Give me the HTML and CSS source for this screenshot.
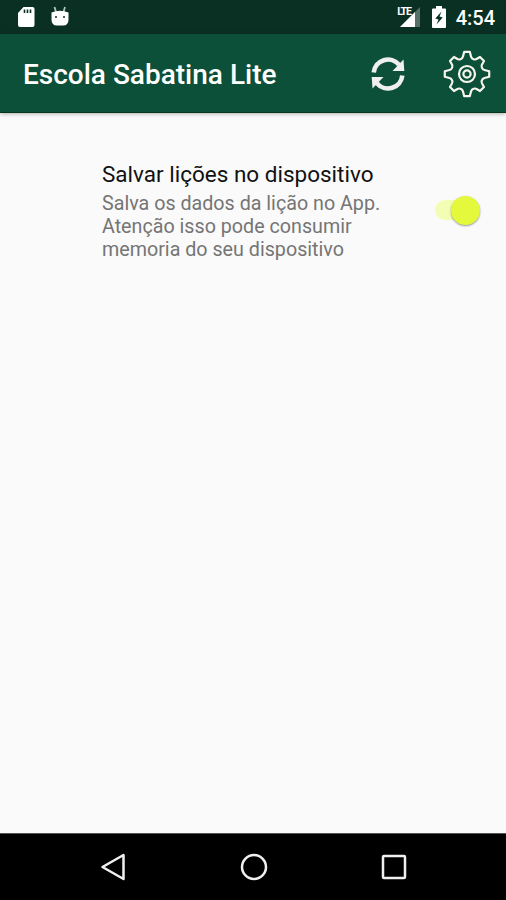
FILE: index.html
```html
<!DOCTYPE html>
<html lang="pt-br">
<head>
  <meta charset="UTF-8">
  <meta name="viewport" content="width=device-width, initial-scale=1.0">
  <title>Escola Sabatina Lite</title>
  <link rel="stylesheet" href="styles.css">
</head>
<body>
  <div class="statusbar">
    <svg class="icon-sd" width="18" height="22" viewBox="0 0 18 22">
      <path d="M6.500 1H15.500q2 0 2 2v16q0 2-2 2H3q-2 0-2-2V7z" fill="#fff"/>
      <path d="M7.500 3.500v3.500M10.500 3.500v3.500M13.500 3.500v3.500" stroke="#0a3024" stroke-width="1.600"/>
    </svg>
    <svg class="icon-android" width="20" height="22" viewBox="0 0 20 22">
      <path d="M4.500 1l1.500 5M15 1l-1.500 5" stroke="#b5c1bd" stroke-width="1.800"/>
      <path d="M1.500 6.500q8.500-3.500 17 0v7q0 6-5.500 6H7q-5.500 0-5.500-6z" fill="#fff"/>
      <circle cx="6" cy="11" r="1" fill="#0a3024"/>
      <circle cx="14" cy="11" r="1" fill="#0a3024"/>
    </svg>
    <div class="signal">
      <span class="lte">LTE</span>
      <svg width="22" height="20" viewBox="0 0 22 20">
        <path d="M1 20L21 0v20z" fill="#547068"/>
        <path d="M1 20L16 5v15z" fill="#fff"/>
      </svg>
    </div>
    <svg class="icon-battery" width="14" height="22" viewBox="0 0 14 22">
      <path d="M4 0h6v2.500h3q1 0 1 1V21q0 1-1 1H1q-1 0-1-1V3.500q0-1 1-1h3z" fill="#fff"/>
      <path d="M9.500 5.500L3.300 12.500l3.200 1-2 5L10.700 11.500l-3.200-1z" fill="#0a3024"/>
    </svg>
    <span class="clock">4:54</span>
  </div>

  <div class="toolbar">
    <h1>Escola Sabatina Lite</h1>
    <a class="action" href="#" aria-label="Atualizar">
      <svg width="36" height="36" viewBox="-18 -18 36 36">
        <g id="seta">
          <path d="M-14.300-1.500A14.300 14.300 0 0 1 11-9.200" fill="none" stroke="#f0f0f0" stroke-width="4.600"/>
          <path d="M15.500-14.500L16.300-3H4.500z" fill="#f0f0f0"/>
        </g>
        <use href="#seta" transform="rotate(180)"/>
      </svg>
    </a>
    <a class="action" href="#" aria-label="Configurações">
      <svg width="48" height="48" viewBox="-24 -24 48 48" fill="none" stroke="#f7f7ef" stroke-width="2.200" stroke-linejoin="round">
        <path d="M-2.800-22.200H2.800L4-17.500Q4.500-15.500 6.500-14.800Q8.500-14 10-15.300L13-17 17-13 15.300-10Q14-8.500 14.800-6.500Q15.500-4.500 17.500-4L22.200-2.800V2.800L17.500 4Q15.500 4.500 14.800 6.500Q14 8.500 15.300 10L17 13 13 17 10 15.300Q8.500 14 6.500 14.800Q4.500 15.500 4 17.500L2.800 22.200H-2.800L-4 17.500Q-4.500 15.500-6.500 14.800Q-8.500 14-10 15.300L-13 17-17 13-15.300 10Q-14 8.500-14.800 6.500Q-15.500 4.500-17.500 4L-22.200 2.800V-2.800L-17.500-4Q-15.500-4.500-14.800-6.500Q-14-8.500-15.300-10L-17-13-13-17-10-15.300Q-8.500-14-6.500-14.800Q-4.500-15.500-4-17.500z"/>
        <circle r="8"/>
        <circle r="3.600"/>
      </svg>
    </a>
  </div>

  <!-- Preferências -->
  <div class="content">
    <div class="preference">
      <div class="preference-text">
        <h2>Salvar lições no dispositivo</h2>
        <p>Salva os dados da lição no App.<br>Atenção isso pode consumir<br>memoria do seu dispositivo</p>
      </div>
      <div class="switch"><span class="thumb"></span></div>
    </div>
  </div>

  <div class="navbar">
    <svg width="28" height="30" viewBox="0 0 28 30"><path d="M2.500 15L23.500 3v24z"/></svg>
    <svg width="28" height="30" viewBox="0 0 28 30"><circle cx="14" cy="15" r="12"/></svg>
    <svg width="28" height="30" viewBox="0 0 28 30"><rect x="3" y="4" width="22" height="22" rx="1"/></svg>
  </div>
</body>
</html>
```

FILE: styles.css
```css
* {
  margin: 0;
  padding: 0;
  box-sizing: border-box;
}

body {
  font-family: Roboto, sans-serif;
  background-color: #fafafa;
  display: flex;
  flex-direction: column;
  height: 100vh;
  overflow: hidden;
}

svg {
  display: block;
  flex: none;
}

/* Barra de status */
.statusbar {
  height: 34px;
  background-color: #0a3024;
  color: white;
  display: flex;
  align-items: center;
  padding: 0 11px 0 17px;
}

.icon-android {
  margin-left: 15px;
}

.signal {
  display: flex;
  align-items: flex-start;
  margin-left: auto;
}

.lte {
  font-size: 10.5px;
  line-height: 10px;
  font-weight: 700;
  letter-spacing: -1.2px;
  margin-right: -12px;
  z-index: 1;
}

.icon-battery {
  margin-left: 11px;
}

.clock {
  font-size: 20px;
  line-height: 24px;
  font-weight: 500;
  margin-left: 10px;
  padding-top: 2px;
}

/* Barra do aplicativo */
.toolbar {
  height: 79px;
  background-color: #0d5039;
  border-bottom: 1px solid #063718;
  box-shadow: 0 1px 4px rgba(0, 0, 0, 0.3);
  color: white;
  display: flex;
  align-items: center;
  gap: 37px;
  padding: 1px 15px 0 23px;
}

.toolbar h1 {
  font-size: 28px;
  font-weight: 500;
  margin-right: auto;
  padding-top: 2px;
  white-space: nowrap;
}

/* Lista de preferências */
.content {
  flex: 1;
}

.preference {
  display: flex;
  align-items: center;
  justify-content: space-between;
  padding: 47px 26px 0 102px;
}

.preference h2 {
  font-size: 22.5px;
  line-height: 28px;
  font-weight: 400;
  color: #111;
  white-space: nowrap;
}

.preference p {
  font-size: 19.7px;
  line-height: 23px;
  color: #757575;
  margin-top: 4px;
  white-space: nowrap;
}

.switch {
  width: 45px;
  height: 20px;
  border-radius: 10px;
  background-color: #f4fdb4;
  display: flex;
  align-items: center;
  justify-content: flex-end;
  margin-bottom: 1px;
}

.thumb {
  width: 29px;
  height: 29px;
  border-radius: 50%;
  background-color: #e4f83c;
  box-shadow: 0 1px 2px rgba(0, 0, 0, 0.4);
}

/* Botões de navegação */
.navbar {
  height: 67px;
  background-color: black;
  border-top: 1px solid #555;
  display: flex;
  align-items: center;
  justify-content: center;
  gap: 112px;
  padding-left: 1px;
}

.navbar svg {
  fill: none;
  stroke: #f0f0f0;
  stroke-width: 2.5;
  stroke-linejoin: round;
}
```
